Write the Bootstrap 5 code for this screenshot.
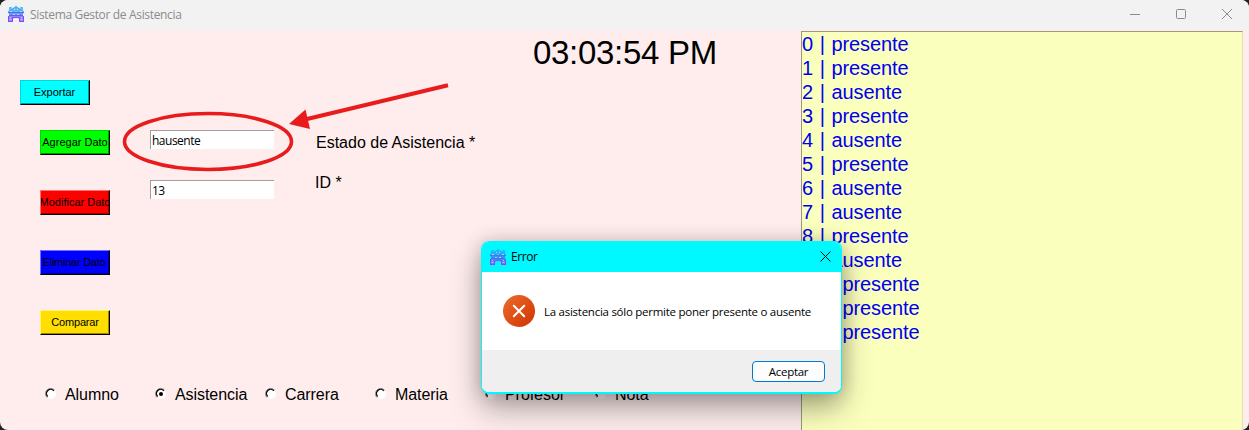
<!DOCTYPE html>
<html lang="es">
<head>
<meta charset="utf-8">
<title>Sistema Gestor de Asistencia</title>
<link href="https://cdn.jsdelivr.net/npm/bootstrap@5.3.0/dist/css/bootstrap.min.css" rel="stylesheet">
<style>
html,body{height:430px;overflow:hidden;background:#222}
body{font-family:"Liberation Sans",Arial,sans-serif;color:#000;font-size:16px;line-height:24px}
.win{width:1249px;height:430px;background:#ffeded;border-radius:8px}
.titlebar{height:30px;background:#f2f2f2;padding:0 17px 2px 8px}
.ui{font-family:"Open Sans","Noto Sans",sans-serif;font-size:12px}
.app-title{color:#8b8b8b;font-size:12px;letter-spacing:-.34px;margin-left:6px;margin-top:1px}
.caps{gap:36px}
.pane{width:801px;height:400px}
.clock{font-size:33px;letter-spacing:-.3px;line-height:40px;padding:3px 0 0 533px;height:50px}
.tkbtn{width:70px;height:25px;padding:0;border:1px solid;border-radius:0;box-shadow:inset -1px -1px 0 rgba(0,0,0,.4);font-size:11px;line-height:23px;color:#000;overflow:hidden;white-space:nowrap;display:flex;justify-content:center}
.b-cyan{background:#0ff;border-color:#00d7d7 #000 #000 #00d7d7;padding-right:1px}
.b-green{background:#0f0;border-color:#00d700 #000 #000 #00d700}
.b-red{background:#f00;border-color:#ff7070 #000 #000 #ff7070}
.b-blue{background:#00f;border-color:#7070ff #000 #000 #7070ff;letter-spacing:-.25px;padding-right:2px}
.b-gold{background:#ffde00;border-color:#fff570 #000 #000 #fff570;letter-spacing:-.15px}
.tools{width:70px;gap:35px}
.entry{width:124px;height:19px;border:0;border-top:1px solid #a0a0a0;border-left:1px solid #a0a0a0;border-radius:0;background:#fff;padding:0 0 0 1px;line-height:17px;font-size:12px;letter-spacing:-.5px;outline:0;color:#000}
.radios{padding-left:45px;height:24px}
.opt{width:110px;gap:8px;letter-spacing:-.06px}
.opt svg{margin-top:-2px}
.records{width:442px;height:399px;margin-top:1px;background:#fbffbd;border:1px solid #979b78;border-right-color:#dfe0b8;border-width:1px 1px 0 1px;color:#0000f0;font-size:20px;line-height:24px;word-spacing:1.2px;letter-spacing:-.1px;font-kerning:none}
.dlg{left:481px;top:241px;width:361px;height:153px;border:1px solid #00f8ff;border-bottom-width:2px;border-radius:8px;box-shadow:0 14px 30px rgba(0,0,0,.34),0 0 18px rgba(0,0,0,.16);overflow:hidden;background:#fff}
.dlg-head{height:30px;background:#00f9ff;padding:0 10px 0 8px}
.dlg-body{height:78px;padding-left:21px}
.dlg-foot{height:43px;background:#efefef;padding-right:16px}
.msg{margin:1px 0 0 9px;font-size:11.5px;letter-spacing:-.26px}
.ok{width:73px;height:21px;border:1px solid #0078d4;border-radius:4px;background:#fdfdfd;padding:0;line-height:19px;font-size:11.5px;letter-spacing:-.3px;color:#000}
</style>
</head>
<body>
<svg width="0" height="0" class="position-absolute">
<defs>
<linearGradient id="lg" x1="0" y1="0" x2="0" y2="16" gradientUnits="userSpaceOnUse"><stop offset="0" stop-color="#18c6ee"/><stop offset=".5" stop-color="#466bef"/><stop offset="1" stop-color="#a43cff"/></linearGradient>
<symbol id="logo" viewBox="0 0 16 16">
<path d="M1 1h3v2l4-3 4 3V1h3v3l1 2-1 2v2h1v6h-5v-3l-1.500-1.500h-3L5 13v3H0v-6h1V8L0 6l1-2z" fill="url(#lg)" opacity=".72"/>
<g fill="none" stroke="url(#lg)" stroke-width="1">
<path d="M4 3.500l4-3 4 3M0 6.500h16M1 9.500h14M.5 10v6M15.500 10v6M4.500 11.500v4M11.500 11.500v4M0 15.500h5M11 15.500h5M5 11.500h6"/>
</g>
<path d="M2 5.500h2M12 5.500h2M6 3.500h1M9 3.500h1M5 8.500h2M9 8.500h2M2 11.500h1M13 11.500h1M1.500 13.500h2M12.500 13.500h2M7.500 5.500h1" stroke="#d9e5ff" stroke-width="1" opacity=".7"/>
</symbol>
<symbol id="radio" viewBox="0 0 12 12">
<circle cx="6" cy="6" r="5" fill="#fff"/>
<path d="M2 9.500A5.100 5.100 0 0 1 9.500 2" fill="none" stroke="#8f8a8a" stroke-width="1"/>
<path d="M2.700 8.500A4.200 4.200 0 0 1 8.800 2.700" fill="none" stroke="#000" stroke-width="1.300"/>
</symbol>
<linearGradient id="err" x1="0" y1="0" x2="1" y2="1"><stop offset="0" stop-color="#ef6c2c"/><stop offset="1" stop-color="#cf3300"/></linearGradient>
</defs>
</svg>
<div class="win position-relative overflow-hidden">
<header class="titlebar d-flex align-items-center justify-content-between">
<div class="d-flex align-items-center"><svg width="16" height="16"><use href="#logo"/></svg><span class="ui app-title">Sistema Gestor de Asistencia</span></div>
<div class="caps d-flex align-items-center">
<svg width="10" height="10" stroke="#8b8b8b"><path d="M0 5.500h10"/></svg>
<svg width="10" height="10" stroke="#8b8b8b" fill="none"><rect x=".5" y=".5" width="9" height="9" rx="1"/></svg>
<svg width="10" height="10" stroke="#8b8b8b"><path d="M0 0l10 10M10 0L0 10"/></svg>
</div>
</header>
<main class="d-flex">
<section class="pane d-flex flex-column">
<div class="clock">03:03:54 PM</div>
<div class="ps-4" style="margin-left:-4px"><button class="tkbtn b-cyan">Exportar</button></div>
<div class="d-flex" style="padding:25px 0 0 40px">
<div class="tools d-flex flex-column">
<button class="tkbtn b-green">Agregar Dato</button><button class="tkbtn b-red">Modificar Dato</button><button class="tkbtn b-blue">Eliminar Dato</button><button class="tkbtn b-gold">Comparar</button>
</div>
<div class="d-flex flex-column" style="margin-left:40px;gap:31px">
<input class="entry ui" value="hausente"><input class="entry ui" value="13">
</div>
<div class="d-flex flex-column" style="margin:1px 0 0 42px;gap:16px">
<span>Estado de Asistencia *</span><span style="margin-left:-1px">ID *</span>
</div>
</div>
<div class="radios d-flex" style="margin-top:48px">
<div class="opt d-flex align-items-center"><svg width="12" height="12"><use href="#radio"/></svg>Alumno</div>
<div class="opt d-flex align-items-center"><svg width="12" height="12"><use href="#radio"/><circle cx="6" cy="6" r="2"/></svg>Asistencia</div>
<div class="opt d-flex align-items-center"><svg width="12" height="12"><use href="#radio"/></svg>Carrera</div>
<div class="opt d-flex align-items-center"><svg width="12" height="12"><use href="#radio"/></svg>Materia</div>
<div class="opt d-flex align-items-center"><svg width="12" height="12"><use href="#radio"/></svg>Profesor</div>
<div class="opt d-flex align-items-center"><svg width="12" height="12"><use href="#radio"/></svg>Nota</div>
</div>
</section>
<section class="records">
<div>0 | presente</div><div>1 | presente</div><div>2 | ausente</div><div>3 | presente</div><div>4 | ausente</div><div>5 | presente</div><div>6 | ausente</div><div>7 | ausente</div><div>8 | presente</div><div>9 | ausente</div><div>10 | presente</div><div>11 | presente</div><div>12 | presente</div>
</section>
</main>
<svg class="position-absolute top-0 start-0 pe-none" width="500" height="200">
<ellipse cx="208" cy="141.500" rx="83.500" ry="28" fill="none" stroke="#e81c1c" stroke-width="3.600"/>
<path d="M448 85.300L305 119.500" stroke="#e81c1c" stroke-width="4"/><path d="M289 124L305.500 109.500L310 129z" fill="#e81c1c"/>
</svg>
<div class="dlg position-absolute" role="dialog">
<div class="dlg-head d-flex align-items-center justify-content-between">
<div class="d-flex align-items-center"><svg width="16" height="16"><use href="#logo"/></svg><span class="ui" style="margin-left:5px;letter-spacing:-.4px">Error</span></div>
<svg width="11" height="11" stroke="#000" fill="none" style="margin-top:-2px"><path d="M.5 .5l10 10M10.500 .5l-10 10"/></svg>
</div>
<div class="dlg-body d-flex align-items-center">
<svg width="32" height="32"><circle cx="16" cy="16" r="16" fill="url(#err)"/><path d="M10.800 10.800l10.400 10.400M21.200 10.800L10.800 21.200" stroke="#fff" stroke-width="2" stroke-linecap="round"/></svg>
<span class="ui msg">La asistencia sólo permite poner presente o ausente</span>
</div>
<div class="dlg-foot d-flex align-items-center justify-content-end"><button class="ok ui">Aceptar</button></div>
</div>
</div>
<script src="https://cdn.jsdelivr.net/npm/bootstrap@5.3.0/dist/js/bootstrap.bundle.min.js"></script>
</body>
</html>
